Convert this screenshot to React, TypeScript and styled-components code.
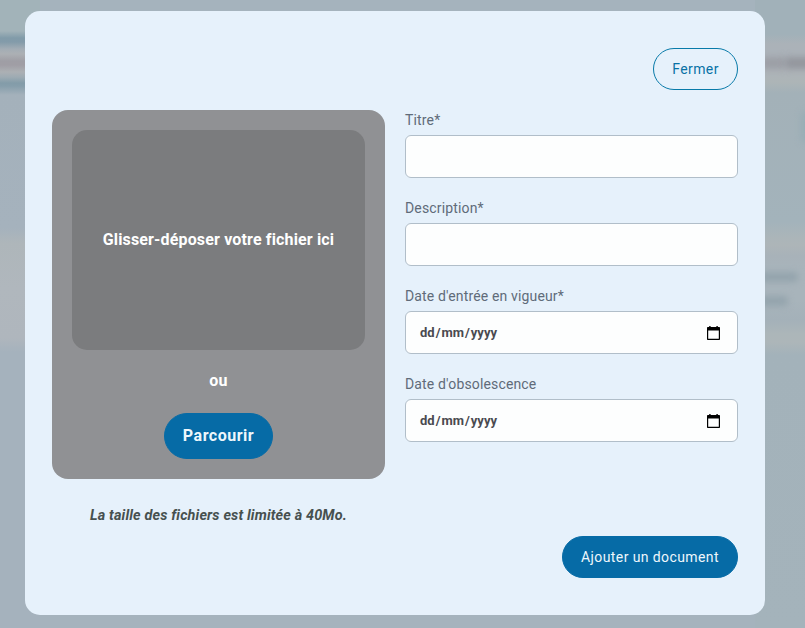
import React from "react";
import styled, { createGlobalStyle, css } from "styled-components";

const GlobalStyle = createGlobalStyle`
  *, *::before, *::after { box-sizing: border-box; }
  body {
    margin: 0;
    overflow: hidden;
    font-family: Roboto, sans-serif;
    background: #a5b3bd;
  }
  button { font-family: inherit; cursor: pointer; }
`;

const Screen = styled.div`
  position: relative;
  height: 100vh;
  padding: 11px 40px 13px 25px;
  display: flex;
  overflow: hidden;
`;

const Backdrop = styled.div`
  position: absolute;
  inset: 0;
  display: flex;
  justify-content: space-between;
`;

const LeftPage = styled.div`
  width: 40px;
  background: linear-gradient(
    to bottom,
    #a2b3b9 0, #a2b3b9 31px, #819ba9 38px, #839baa 42px,
    #a3adb5 49px, #acb0b4 54px, #9f9ea5 61px, #a09ea5 65px,
    #acb0b4 72px, #9eabb3 77px, #839ca9 83px, #869eab 86px,
    #a4b1bb 95px, #a5b2bd 228px, #aeb6ba 243px, #b0b7bd 288px,
    #afb6bd 338px, #a5b2bd 352px, #a5b2bd 100%
  );
`;

const RightPage = styled.div`
  position: relative;
  width: 50px;
  background: linear-gradient(
    to bottom,
    #a1b1b9 0, #a1b1b9 34px, #abb2b8 44px, #abb2b9 55px,
    #adb3b8 71px, #adb5b7 82px, #a3b1b8 93px, #a3b3bb 222px,
    #abb5b9 237px, #adb5b8 245px, #a8b2b9 256px, #a8b4bb 270px,
    #a8b4bb 300px, #a4b1b9 320px, #acb6b9 334px, #adb6b9 342px,
    #a3b2ba 355px, #a4b3bb 100%
  );
`;

const Smudge = styled.span<{ $x: number; $y: number; $w: number; $h: number; $tone: string }>`
  position: absolute;
  left: ${(p) => p.$x}px;
  top: ${(p) => p.$y}px;
  width: ${(p) => p.$w}px;
  height: ${(p) => p.$h}px;
  border-radius: 4px;
  background: ${(p) => p.$tone};
  filter: blur(3px);
`;

const Dialog = styled.section`
  position: relative;
  flex: 1;
  padding: 37px 27px;
  border-radius: 15px;
  background: #e6f1fb;
  display: flex;
  flex-direction: column;
`;

const Header = styled.header`
  display: flex;
  justify-content: flex-end;
  margin-bottom: 20px;
`;

const PillButton = styled.button<{ $width: number; $variant?: "outline" | "strong" }>`
  width: ${(p) => p.$width}px;
  height: 42px;
  padding: 0;
  border: 1px solid #066ba6;
  border-radius: 23px;
  background: #066ba6;
  color: #eef7fc;
  font-size: 14px;
  letter-spacing: 0.4px;
  white-space: nowrap;
  ${(p) => p.$variant === "outline" && css`
    background: transparent;
    border-color: #087aa9;
    color: #0872a6;
    font-weight: 400;
  `}
  ${(p) => p.$variant === "strong" && css`
    height: 46px;
    padding-bottom: 2px;
    font-size: 16px;
    font-weight: 700;
    letter-spacing: 0.5px;
  `}
`;

const Columns = styled.form`
  display: grid;
  grid-template-columns: 1fr 1fr;
  gap: 20px;
`;

const UploadPanel = styled.div`
  height: 369px;
  padding: 20px;
  border-radius: 16px;
  background: #909194;
  color: #fff;
  font-size: 16px;
  font-weight: 700;
  letter-spacing: 0.15px;
  display: flex;
  flex-direction: column;
  align-items: center;
`;

const DropZone = styled.div`
  width: 100%;
  height: 220px;
  padding-bottom: 2px;
  border-radius: 15px;
  background: #7b7c7e;
  display: flex;
  align-items: center;
  justify-content: center;
`;

const Or = styled.span`
  margin: 21px 0 23px;
  line-height: 19px;
`;

const SizeNote = styled.p`
  margin: 28px 0 0;
  line-height: 17px;
  text-align: center;
  font-size: 14.4px;
  font-style: italic;
  font-weight: 700;
  letter-spacing: 0.15px;
  color: #46504f;
`;

const Fields = styled.div`
  display: flex;
  flex-direction: column;
  gap: 20px;
`;

const Field = styled.label`
  display: flex;
  flex-direction: column;
  font-size: 14px;
  line-height: 21px;
  letter-spacing: 0.15px;
  color: #606b79;
`;

const controlStyle = css`
  height: 43px;
  margin-top: 4px;
  padding: 0 14px;
  border: 1px solid #b1bec9;
  border-radius: 6px;
  background: #fdfefe;
`;

const TextInput = styled.input`
  ${controlStyle}
  font: 700 13px Roboto, sans-serif;
  color: #4a4a50;
  outline: none;
`;

const DateInput = styled.div`
  ${controlStyle}
  padding-right: 17px;
  display: flex;
  align-items: center;
  justify-content: space-between;
  font-size: 13px;
  font-weight: 700;
  letter-spacing: 0;
  color: #4a4a50;
`;

const DateText = styled.span`
  display: flex;
  gap: 1px;
`;

const CalendarGlyph = styled.svg`
  width: 13px;
  height: 14px;
  margin-top: 1px;
`;

const Footer = styled.footer`
  display: flex;
  justify-content: flex-end;
  margin-top: 12px;
`;

const CalendarIcon = () => (
  <CalendarGlyph viewBox="0 0 13 14" aria-hidden="true">
    <path
      fill="#000"
      fillRule="evenodd"
      d="M2.2 0h1.4v1h5.8V0h1.4v1H12c.6 0 1 .4 1 1v11c0 .6-.4 1-1 1H1c-.6 0-1-.4-1-1V2c0-.6.4-1 1-1h1.2zM1.2 4.4v8.4h10.6V4.4z"
    />
  </CalendarGlyph>
);

const DatePlaceholder = () => (
  <DateInput role="textbox" tabIndex={0}>
    <DateText>
      <span>dd</span><span>/</span><span>mm</span><span>/</span><span>yyyy</span>
    </DateText>
    <CalendarIcon />
  </DateInput>
);

export default function App() {
  return (
    <>
      <GlobalStyle />
      <Screen>
        <Backdrop aria-hidden="true">
          <LeftPage />
          <RightPage>
            <Smudge $x={6} $y={57} $w={25} $h={12} $tone="#9c9fa6" />
            <Smudge $x={30} $y={57} $w={30} $h={12} $tone="#94979e" />
            <Smudge $x={46} $y={112} $w={16} $h={30} $tone="#98adb5" />
            <Smudge $x={4} $y={272} $w={39} $h={10} $tone="#94a4ad" />
            <Smudge $x={4} $y={296} $w={29} $h={10} $tone="#94a4ad" />
          </RightPage>
        </Backdrop>
        <Dialog role="dialog" aria-modal="true">
          <Header>
            <PillButton type="button" $width={85} $variant="outline">Fermer</PillButton>
          </Header>
          <Columns>
            <div>
              <UploadPanel>
                <DropZone>Glisser-déposer votre fichier ici</DropZone>
                <Or>ou</Or>
                <PillButton type="button" $width={109} $variant="strong">Parcourir</PillButton>
              </UploadPanel>
              <SizeNote>La taille des fichiers est limitée à 40Mo.</SizeNote>
            </div>
            <Fields>
              <Field>Titre*<TextInput type="text" /></Field>
              <Field>Description*<TextInput type="text" /></Field>
              <Field as="div">Date d'entrée en vigueur*<DatePlaceholder /></Field>
              <Field as="div">Date d'obsolescence<DatePlaceholder /></Field>
            </Fields>
          </Columns>
          <Footer>
            <PillButton type="button" $width={176}>Ajouter un document</PillButton>
          </Footer>
        </Dialog>
      </Screen>
    </>
  );
}
